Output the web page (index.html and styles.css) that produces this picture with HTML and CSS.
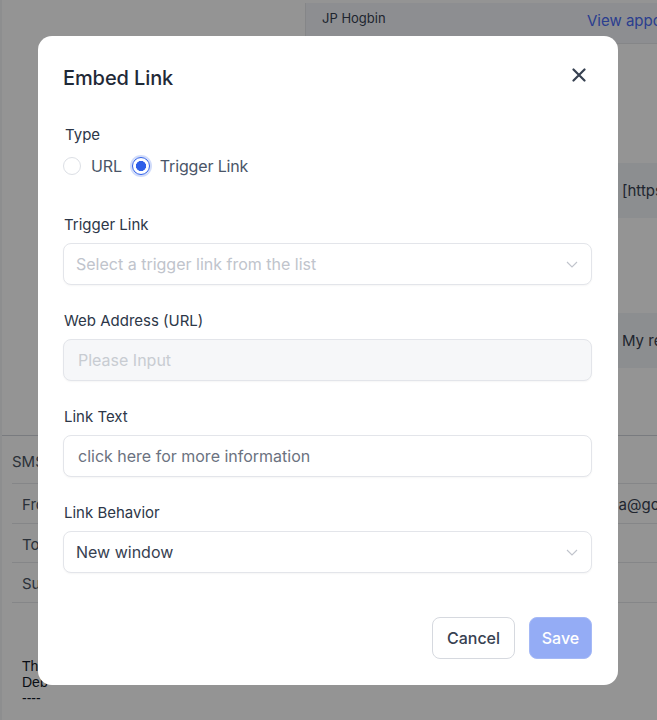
FILE: index.html
```html
<!DOCTYPE html>
<html lang="en">
<head>
<meta charset="utf-8">
<title>Embed Link</title>
<link rel="stylesheet" href="styles.css">
</head>
<body>
<div class="page">
  <div class="top-area">
    <div class="left-col">
      <div class="accent accent-blue"></div>
      <div class="accent accent-orange"></div>
    </div>
    <div class="right-col">
      <div class="conv-header">
        <span class="conv-name">JP Hogbin</span>
        <span class="conv-link">View appointment</span>
      </div>
      <div class="msg-band band-one">[https://example.com]</div>
      <div class="msg-band band-two">My reply</div>
    </div>
  </div>
  <div class="sms-section">
    <div class="sms-title">SMS</div>
    <div class="mail-row"><span class="mail-key">From</span><span class="mail-val">jessica@goodmail.com</span></div>
    <div class="mail-row"><span class="mail-key">To</span><span class="mail-val"></span></div>
    <div class="mail-row"><span class="mail-key">Sub</span><span class="mail-val"></span></div>
    <div class="mail-body">
      <div class="mail-line">Th</div>
      <div class="mail-line">Deb</div>
      <div class="mail-line">----</div>
    </div>
  </div>
</div>

<div class="overlay"></div>

<div class="modal">
  <div class="modal-header">
    <h2 class="modal-title">Embed Link</h2>
    <button class="close-btn" aria-label="Close">
      <svg width="14" height="14" viewBox="0 0 14 14"><path d="M1.5 1.5 L12.5 12.5 M12.5 1.5 L1.5 12.5" stroke="#374151" stroke-width="2.2" stroke-linecap="round" fill="none"/></svg>
    </button>
  </div>

  <div class="form-item type-item">
    <div class="label">Type</div>
    <div class="radio-group">
      <label class="radio"><span class="radio-circle"></span><span class="radio-text">URL</span></label>
      <label class="radio"><span class="radio-circle checked"></span><span class="radio-text">Trigger Link</span></label>
    </div>
  </div>

  <div class="form-item">
    <div class="label">Trigger Link</div>
    <div class="field select">
      <span class="placeholder">Select a trigger link from the list</span>
      <svg class="chevron" width="12" height="7" viewBox="0 0 12 7"><path d="M1 1 L6 6 L11 1" stroke="#c0c4cc" stroke-width="1.1" fill="none"/></svg>
    </div>
  </div>

  <div class="form-item">
    <div class="label">Web Address (URL)</div>
    <div class="field disabled">
      <span class="placeholder light">Please Input</span>
    </div>
  </div>

  <div class="form-item">
    <div class="label">Link Text</div>
    <div class="field">
      <span class="value muted">click here for more information</span>
    </div>
  </div>

  <div class="form-item">
    <div class="label">Link Behavior</div>
    <div class="field select">
      <span class="value dark">New window</span>
      <svg class="chevron" width="12" height="7" viewBox="0 0 12 7"><path d="M1 1 L6 6 L11 1" stroke="#c0c4cc" stroke-width="1.1" fill="none"/></svg>
    </div>
  </div>

  <div class="modal-footer">
    <button class="btn btn-cancel">Cancel</button>
    <button class="btn btn-save">Save</button>
  </div>
</div>
</body>
</html>
```

FILE: styles.css
```css
* { box-sizing: border-box; }
html, body { margin: 0; padding: 0; }
body {
  font-family: Inter, "Noto Sans", "Liberation Sans", sans-serif;
  background: #ffffff;
  width: 657px;
  height: 720px;
  overflow: hidden;
}

/* ---------- background page ---------- */
.page {
  height: 720px;
  overflow: hidden;
  border-left: 2px solid #f3f4f6;
}
.top-area {
  display: grid;
  grid-template-columns: 305px 352px;
  height: 435px;
  margin-left: -2px;
}
.left-col {
  display: flex;
  flex-direction: column;
}
.accent { width: 2px; }
.accent-blue { margin-top: 72px; height: 98px; background: #4a6cf7; }
.accent-orange { margin-top: 105px; height: 15px; background: #e8b46a; }

.right-col {
  display: flex;
  flex-direction: column;
  overflow: hidden;
}
.conv-header {
  margin-top: 3px;
  height: 41px;
  background: #f3f5fa;
  border-left: 1px solid #e5e7eb;
  border-bottom: 1px solid #e5e7eb;
  display: flex;
  align-items: center;
  padding-left: 16px;
  white-space: nowrap;
  overflow: hidden;
}
.conv-name {
  width: 265px;
  flex: none;
  font-size: 13px;
  color: #374151;
  position: relative;
  top: -5px;
}
.conv-link {
  font-size: 15px;
  color: #4a6cf7;
  position: relative;
  top: -3px;
}
.msg-band {
  background: #f2f4f8;
  font-size: 15px;
  color: #374151;
  white-space: nowrap;
  padding-left: 317px;
  overflow: hidden;
}
.band-one { margin-top: 119px; height: 55px; line-height: 55px; }
.band-two { margin-top: 95px; height: 55px; line-height: 56px; }

.sms-section {
  border-top: 1px solid #d1d5db;
  color: #4b5563;
  font-size: 15px;
}
.sms-title {
  height: 48px;
  line-height: 51px;
  margin-left: 10px;
  border-bottom: 1px solid #e5e7eb;
}
.mail-row {
  display: flex;
  height: 39.6px;
  line-height: 42px;
  margin-left: 10px;
  border-bottom: 1px solid #e5e7eb;
  white-space: nowrap;
}
.mail-key {
  width: 26px;
  margin-left: 10px;
  overflow: hidden;
  flex: none;
}
.mail-val {
  margin-left: 530px;
  color: #374151;
}
.mail-body {
  margin-top: 55px;
  padding-left: 20px;
  font-family: "Liberation Sans", Arial, sans-serif;
  font-size: 14px;
  line-height: 16px;
  color: #111827;
}

.overlay {
  position: fixed;
  inset: 0;
  background: rgba(0, 0, 0, 0.42);
}

/* ---------- modal ---------- */
.modal {
  position: absolute;
  left: 38px;
  top: 36px;
  width: 580px;
  height: 649px;
  background: #ffffff;
  border-radius: 14px;
  padding: 28px 26px 26px 25px;
  display: flex;
  flex-direction: column;
  color: #1f2937;
}
.modal-header {
  display: flex;
  justify-content: space-between;
  align-items: center;
  height: 28px;
}
.modal-title {
  margin: 0;
  font-size: 20px;
  font-weight: 500;
  line-height: 28px;
  color: #1f2937;
  letter-spacing: -0.1px;
}
.close-btn {
  border: 0;
  background: none;
  padding: 0;
  width: 14px;
  height: 14px;
  margin-right: 6px;
  margin-top: -6px;
  display: flex;
}

.form-item { margin-top: 25px; }
.type-item { margin-top: 32px; margin-bottom: 12px; }
.label {
  font-size: 15px;
  line-height: 20px;
  color: #2d3748;
  margin-left: 1px;
  padding-top: 1px;
  margin-bottom: 8px;
}
.type-item .label { margin-left: 2px; margin-bottom: 10px; }

.radio-group {
  display: flex;
  align-items: center;
  gap: 10px;
  height: 22px;
}
.radio {
  display: flex;
  align-items: center;
  gap: 10px;
}
.radio-circle {
  width: 18px;
  height: 18px;
  border-radius: 50%;
  border: 1px solid #dcdfe5;
  background: #fff;
  flex: none;
}
.radio-circle.checked {
  border: 1.5px solid #2f5fe8;
  background: radial-gradient(circle, #2f5fe8 0 4.8px, #fff 5.3px);
  box-shadow: 0 0 0 2px rgba(47, 95, 232, 0.22);
}
.radio-text {
  font-size: 16px;
  color: #4a5568;
  line-height: 22px;
  letter-spacing: -0.15px;
}

.field {
  height: 42px;
  border: 1px solid #e3e5ea;
  border-radius: 8px;
  display: flex;
  align-items: center;
  padding: 0 12px 0 12px;
  background: #fff;
  box-shadow: 0 1px 2px rgba(0, 0, 0, 0.04);
  font-size: 16px;
}
.field.disabled { background: #f6f7f9; padding-left: 14px; }
.select { justify-content: space-between; }
.chevron { margin-right: 1px; flex: none; }
.placeholder { color: #c0c4cc; }
.placeholder.light { color: #c8ccd2; }
.value.muted { color: #6b7280; padding-left: 2px; }
.value.dark { color: #374151; }

.modal-footer {
  margin-top: auto;
  display: flex;
  justify-content: flex-end;
  gap: 14px;
}
.btn {
  height: 42px;
  border-radius: 8px;
  font-family: Inter, "Noto Sans", sans-serif;
  font-size: 16px;
  font-weight: 500;
  padding: 0;
}
.btn-cancel {
  width: 83px;
  background: #fff;
  border: 1px solid #d6d9df;
  color: #374151;
}
.btn-save {
  width: 63px;
  background: #94acf5;
  border: 1px solid #a5b9f6;
  color: #ffffff;
}
```
